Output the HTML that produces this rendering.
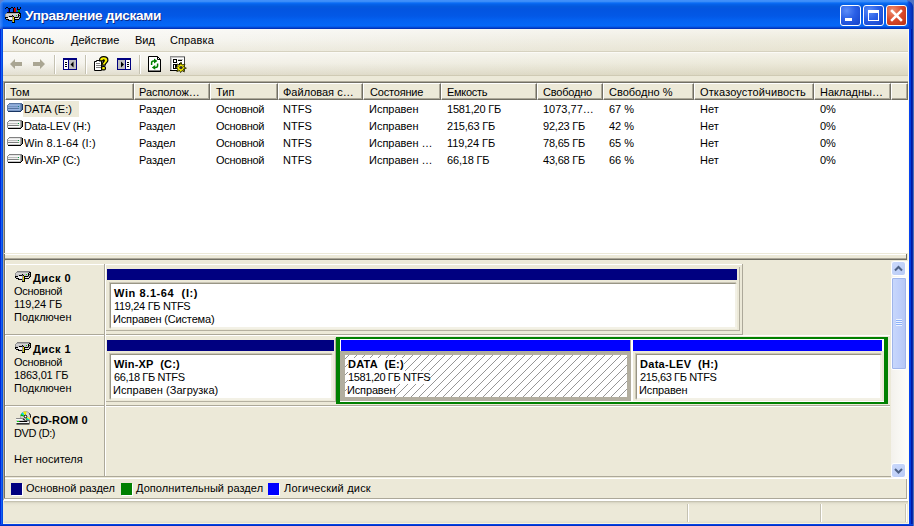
<!DOCTYPE html>
<html lang="ru">
<head>
<meta charset="utf-8">
<title>Управление дисками</title>
<style>
html,body{margin:0;padding:0;}
body{width:914px;height:526px;overflow:hidden;position:relative;background:#ece9d8;
 font-family:"Liberation Sans",sans-serif;font-size:11px;color:#000;}
div,span{position:absolute;box-sizing:border-box;}
.t{white-space:nowrap;line-height:13px;height:13px;transform-origin:0 0;}
.b{font-weight:bold;}
/* window frame */
#title{left:0;top:0;width:914px;height:29px;background:linear-gradient(to bottom,#4391fb 0,#3a8cf8 1.5px,#0b6df5 3px,#0561e8 4.5px,#0459dd 6.5px,#0355e0 9px,#0358e6 16px,#0461f0 20px,#0567f7 25.5px,#0559e6 27px,#0238c2 28px,#002fb4 29px);}
#bl{left:0;top:29px;width:3px;height:497px;background:linear-gradient(to right,#0126da 0,#0126da 1px,#1262f2 1px,#1262f2 2px,#0249e2 2px);}
#br{left:909px;top:0;width:5px;height:526px;background:linear-gradient(to right,#0843f0 0,#0843f0 1px,#023ee0 1px,#023ee0 2px,#0019a6 2px,#0019a6 3px,#0a2aa8 3px,#0a2aa8 4px,#4a6cba 4px);}
#bb{left:0;top:524px;width:913px;height:2px;background:linear-gradient(to bottom,#0543e6 0,#0543e6 1px,#0030c4 1px);}
#ttext{left:25px;top:8px;font-size:13.6px;letter-spacing:-0.3px;font-weight:bold;color:#fff;line-height:16px;height:16px;white-space:nowrap;text-shadow:1px 1px 0 #0a2a8a;}
.cb{top:5px;width:21px;height:21px;border:1px solid #fff;border-radius:3px;
 background:radial-gradient(circle at 30% 25%,#5c8df8 0,#2a5fe6 45%,#1442c8 100%);}
#cclose{background:radial-gradient(circle at 30% 25%,#f09070 0,#d8482a 50%,#b83014 100%);}
/* menu + toolbar */
#menu{left:3px;top:29px;width:906px;height:22px;background:linear-gradient(to bottom,rgba(255,255,255,.45) 0,rgba(255,255,255,0) 50%,rgba(214,208,180,.25) 100%),linear-gradient(to right,#f8f7f3 0,#f5f4ee 25%,#f0eee4 60%,#ece9d9 100%);}
#msep1{left:3px;top:51px;width:905px;height:1px;background:#d6d2c0;}
#msep2{left:3px;top:52px;width:905px;height:1px;background:#fbfaf6;}
#tool{left:3px;top:53px;width:906px;height:22px;background:linear-gradient(to bottom,rgba(255,255,255,.4) 0,rgba(255,255,255,0) 45%,rgba(190,182,150,.35) 100%),linear-gradient(to right,#f6f5f0 0,#f3f1e9 25%,#eeecdf 60%,#ebe8d7 100%);}
#tsep{left:3px;top:75px;width:905px;height:1px;background:#cfcab4;}
.vsep{top:55px;width:1px;height:19px;background:#c5c2b2;border-right:0;}
.vsep2{top:55px;width:1px;height:19px;background:#fff;}
/* list pane */
#list{left:4px;top:81px;width:904px;height:172px;background:#fff;border-left:1px solid #716f64;}
#listtop{left:4px;top:81px;width:904px;height:2px;background:linear-gradient(#aca899 50%,#716f64 50%);}
.hd{top:83px;height:17px;background:#ece9d8;border-right:1px solid #716f64;border-bottom:1px solid #716f64;border-left:1px solid #fff;border-top:1px solid #fff;box-shadow:inset -1px -1px 0 #aca899;}
/* lower pane */
.hl{height:1px;background:#aca899;}
.hw{height:1px;background:#fff;}
.bar{height:11px;background:#000080;}
.barL{height:11px;background:#0000ff;}
.vol{background:#fff;border-style:solid;border-width:1px 2px 2px 1px;border-color:#989585 #f3f1e6 #f3f1e6 #989585;box-shadow:-1px -1px 0 #cac6b6;}

.sbtn{width:15px;height:15px;border-radius:3px;border:1px solid #fff;background:linear-gradient(135deg,#cbd9fb,#b9cbf6);}
#thumb{border-radius:2px;border:1px solid #fff;background:linear-gradient(to right,#c9d8fc,#bdcefa 60%,#b4c6f4);box-shadow:0 0 0 1px #9fb5eb inset;}
.ssep{top:504px;width:2px;height:18px;background:linear-gradient(to right,#c5c2b2 50%,#fff 50%);}
#selvol{background:#fff;}
svg{position:absolute;overflow:visible;}
</style>
</head>
<body>
<!-- frame -->
<div id="title"></div>
<div id="bl"></div><div id="br"></div><div id="bb"></div>
<div style="left:0;top:0;width:3px;height:29px;background:linear-gradient(to right,rgba(120,170,255,.5),rgba(60,130,250,.2))"></div>
<div style="left:907px;top:0;width:6px;height:29px;background:linear-gradient(to right,rgba(4,50,200,0) 0,#0a44d8 2px,#0838c4 4px,#0628a8 6px)"></div>
<div style="left:907px;top:0;width:7px;height:7px;background:radial-gradient(circle at 0 100%,rgba(0,0,0,0) 5.5px,#4f74c4 6.5px)"></div>
<div style="left:0;top:0;width:6px;height:6px;background:radial-gradient(circle at 100% 100%,rgba(0,0,0,0) 5.5px,#5a80d0 6.5px)"></div>
<div id="ttext">Управление дисками</div>
<div class="cb" id="cmin" style="left:840px"><div style="left:4px;top:12px;width:7px;height:3px;background:#fff"></div></div>
<div class="cb" id="cmax" style="left:863px"><div style="left:4px;top:4px;width:11px;height:11px;border:1px solid #fff;border-top-width:3px"></div></div>
<div class="cb" id="cclose" style="left:886px"><svg width="19" height="19" style="left:0;top:0"><path d="M5 5L14 14M14 5L5 14" stroke="#fff" stroke-width="2.5" stroke-linecap="square"/></svg></div>

<!-- menu -->
<div id="menu"></div><div id="msep1"></div><div id="msep2"></div>
<div id="tool"></div><div id="tsep"></div>
<span class="t" style="left:12px;top:34px">Консоль</span>
<span class="t" style="left:71px;top:34px">Действие</span>
<span class="t" style="left:135px;top:34px">Вид</span>
<span class="t" style="left:170px;top:34px;letter-spacing:0.1px">Справка</span>


<!-- title icon -->
<svg id="ticon" width="16" height="16" style="left:5px;top:7px" shape-rendering="crispEdges"><rect x="0" y="1" width="1" height="1" fill="#000000"/><rect x="1" y="0" width="1" height="1" fill="#000000"/><rect x="2" y="0" width="1" height="1" fill="#000000"/><rect x="3" y="1" width="1" height="1" fill="#000000"/><rect x="6" y="0" width="1" height="1" fill="#000000"/><rect x="7" y="0" width="1" height="1" fill="#000000"/><rect x="5" y="1" width="1" height="1" fill="#000000"/><rect x="8" y="1" width="1" height="1" fill="#000000"/><rect x="9" y="0" width="1" height="1" fill="#000000"/><rect x="12" y="0" width="1" height="1" fill="#000000"/><rect x="15" y="0" width="1" height="1" fill="#000000"/><rect x="12" y="1" width="1" height="1" fill="#000000"/><rect x="15" y="1" width="1" height="1" fill="#000000"/><rect x="12" y="2" width="1" height="1" fill="#000000"/><rect x="13" y="2" width="1" height="1" fill="#000000"/><rect x="14" y="2" width="1" height="1" fill="#000000"/><rect x="4" y="1" width="1" height="4" fill="#000000"/><rect x="8" y="1" width="1" height="4" fill="#000000"/><rect x="3" y="2" width="1" height="3" fill="#0000c8"/><rect x="9" y="1" width="2" height="4" fill="#c80000"/><rect x="13" y="3" width="2" height="2" fill="#00a000"/><rect x="2" y="5" width="13" height="1" fill="#000000"/><rect x="1" y="6" width="1" height="1" fill="#909090"/><rect x="2" y="6" width="12" height="1" fill="#b0b0b0"/><rect x="14" y="6" width="2" height="1" fill="#000000"/><rect x="0" y="7" width="1" height="1" fill="#909090"/><rect x="1" y="7" width="12" height="1" fill="#d4d4d4"/><rect x="13" y="7" width="1" height="1" fill="#000000"/><rect x="14" y="7" width="1" height="1" fill="#c0c0c0"/><rect x="15" y="7" width="1" height="1" fill="#000000"/><rect x="0" y="8" width="1" height="1" fill="#909090"/><rect x="1" y="8" width="6" height="1" fill="#c8c8c8"/><rect x="7" y="8" width="1" height="1" fill="#000000"/><rect x="8" y="8" width="3" height="1" fill="#c0c0c0"/><rect x="11" y="8" width="1" height="1" fill="#00e000"/><rect x="12" y="8" width="1" height="1" fill="#d0d0d0"/><rect x="13" y="8" width="1" height="1" fill="#000000"/><rect x="14" y="8" width="1" height="1" fill="#404040"/><rect x="15" y="8" width="1" height="1" fill="#000000"/><rect x="0" y="9" width="1" height="1" fill="#909090"/><rect x="1" y="9" width="3" height="1" fill="#c0c0c0"/><rect x="4" y="9" width="3" height="1" fill="#000000"/><rect x="7" y="9" width="1" height="1" fill="#606060"/><rect x="8" y="9" width="1" height="1" fill="#000000"/><rect x="9" y="9" width="4" height="1" fill="#c4bcc4"/><rect x="13" y="9" width="1" height="1" fill="#000000"/><rect x="14" y="9" width="1" height="1" fill="#c0c0c0"/><rect x="15" y="9" width="1" height="1" fill="#000000"/><rect x="0" y="10" width="3" height="1" fill="#000000"/><rect x="3" y="10" width="4" height="1" fill="#e8e8e8"/><rect x="7" y="10" width="1" height="1" fill="#9090a0"/><rect x="8" y="10" width="1" height="1" fill="#f4e800"/><rect x="9" y="10" width="4" height="1" fill="#000000"/><rect x="13" y="10" width="1" height="1" fill="#808080"/><rect x="14" y="10" width="1" height="1" fill="#505050"/><rect x="15" y="10" width="1" height="1" fill="#000000"/><rect x="0" y="11" width="1" height="1" fill="#000000"/><rect x="1" y="11" width="2" height="1" fill="#c0c0c0"/><rect x="3" y="11" width="4" height="1" fill="#f4f4f4"/><rect x="7" y="11" width="1" height="1" fill="#9090a0"/><rect x="8" y="11" width="1" height="1" fill="#c8b800"/><rect x="9" y="11" width="1" height="1" fill="#000000"/><rect x="10" y="11" width="4" height="1" fill="#e0e0e0"/><rect x="14" y="11" width="1" height="1" fill="#000000"/><rect x="1" y="12" width="3" height="1" fill="#000000"/><rect x="4" y="12" width="3" height="1" fill="#e0e0e0"/><rect x="7" y="12" width="1" height="1" fill="#9090a0"/><rect x="8" y="12" width="1" height="1" fill="#f4e800"/><rect x="9" y="12" width="5" height="1" fill="#000000"/><rect x="3" y="13" width="4" height="1" fill="#000000"/><rect x="7" y="13" width="1" height="1" fill="#808090"/><rect x="8" y="13" width="1" height="1" fill="#c8b800"/><rect x="9" y="13" width="1" height="1" fill="#000000"/><rect x="7" y="14" width="1" height="1" fill="#707080"/><rect x="8" y="14" width="1" height="1" fill="#f4e800"/><rect x="9" y="14" width="1" height="1" fill="#000000"/><rect x="7" y="15" width="3" height="1" fill="#000000"/></svg>

<!-- toolbar icons -->
<svg width="12" height="10" style="left:10px;top:59px"><path d="M0 5L5 0V3H12V7H5V10z" fill="#aaa693"/></svg>
<svg width="12" height="10" style="left:33px;top:59px"><path d="M12 5L7 0V3H0V7H7V10z" fill="#aaa693"/></svg>
<div class="vsep" style="left:54px"></div><div class="vsep2" style="left:55px"></div>
<svg width="14" height="12" style="left:63px;top:58px" shape-rendering="crispEdges">
 <rect x="0" y="0" width="14" height="12" fill="#000080"/>
 <rect x="1" y="2" width="4" height="9" fill="#fff"/><rect x="6" y="2" width="7" height="9" fill="#c0c0c0"/>
 <rect x="2" y="4" width="2" height="1" fill="#000"/><rect x="2" y="6" width="2" height="1" fill="#000"/><rect x="2" y="8" width="2" height="1" fill="#000"/>
 <path d="M7.5 6.5L10.5 3.5V9.5z" fill="#000" shape-rendering="geometricPrecision"/>
</svg>
<div class="vsep" style="left:85px"></div><div class="vsep2" style="left:86px"></div>
<svg width="16" height="16" style="left:93px;top:56px">
 <path d="M1.5 5.5H3.5V4.5H8.5V14.5H1.5z" fill="#fff" stroke="#000" stroke-width="1"/>
 <path d="M3 7.5H7M3 9.5H8M3 11.5H8" stroke="#808080" stroke-width="1" fill="none"/>
 <path d="M6.6 4.8C6.2 1.8 8.4 0.7 10.6 0.7C13.2 0.7 14.9 2.1 14.9 4.2C14.9 6.6 12.3 7.1 12.1 9.2H8.7C8.7 6.6 11.3 6.1 11.3 4.5C11.3 3.7 10 3.7 9.9 4.9z" fill="#f8f000" stroke="#000" stroke-width="1.2"/>
 <rect x="8.6" y="10.5" width="3.8" height="3.4" rx="1.2" fill="#f8f000" stroke="#000" stroke-width="1.2"/>
</svg>
<svg width="14" height="12" style="left:117px;top:58px" shape-rendering="crispEdges">
 <rect x="0" y="0" width="14" height="12" fill="#000080"/>
 <rect x="1" y="2" width="7" height="9" fill="#c0c0c0"/><rect x="9" y="2" width="4" height="9" fill="#fff"/>
 <rect x="10" y="4" width="2" height="1" fill="#000"/><rect x="10" y="6" width="2" height="1" fill="#000"/><rect x="10" y="8" width="2" height="1" fill="#000"/>
 <path d="M7 6.5L4 3.5V9.5z" fill="#000" shape-rendering="geometricPrecision"/>
</svg>
<div class="vsep" style="left:139px"></div><div class="vsep2" style="left:140px"></div>
<svg width="13" height="16" style="left:148px;top:56px">
 <path d="M0.5 0.5H9.5L12.5 3.5V15H0.5z" fill="#fff" stroke="#000" stroke-width="1"/>
 <path d="M0 15.5H13" stroke="#000" stroke-width="1"/>
 <path d="M9.5 0.5V3.5H12.5" fill="none" stroke="#000" stroke-width="1"/>
 <path d="M3.6 9V7Q3.6 5 5.6 5H6.5" fill="none" stroke="#008000" stroke-width="1.5"/>
 <path d="M6 2.6L9.4 5L6 7.4z" fill="#008000"/>
 <path d="M9.6 7.5V9.4Q9.6 11.4 7.6 11.4H6.5" fill="none" stroke="#008000" stroke-width="1.5"/>
 <path d="M7.2 9L3.8 11.4L7.2 13.8z" fill="#008000"/>
</svg>
<svg width="17" height="17" style="left:170px;top:56px" shape-rendering="crispEdges">
 <rect x="0" y="0" width="15" height="15" fill="#909090"/>
 <rect x="1" y="1" width="13" height="13" fill="#c8c8c8"/>
 <rect x="2" y="2" width="12" height="12" fill="#fff"/>
 <rect x="0" y="14" width="15" height="1" fill="#000"/><rect x="14" y="1" width="1" height="14" fill="#404040"/>
 <rect x="3" y="3" width="4" height="4" fill="#000"/><rect x="4" y="4" width="2" height="2" fill="#fff"/>
 <rect x="8" y="4" width="4" height="1" fill="#000"/><rect x="8" y="3" width="5" height="1" fill="#c0c0c0"/>
 <rect x="3" y="8" width="4" height="5" fill="#000"/><rect x="4" y="9" width="1" height="3" fill="#fff"/>
 <rect x="9" y="7" width="3" height="3" fill="#000"/>
 <g shape-rendering="geometricPrecision"><path d="M11 6L12 9L15 8L13.6 10.8L16.4 12.2L13.4 13L14.4 16L12 14.6L10.6 16.6L9.6 14.6L6.8 15.6L8 13L5.6 11.6L8.2 10.6L7.2 8L9.8 9z" fill="#f4ec00" stroke="#202000" stroke-width="0.8"/>
 <circle cx="11" cy="11.6" r="1.7" fill="#303030"/></g>
</svg>

<!-- list -->
<div style="left:3px;top:81px;width:1px;height:419px;background:#aca899"></div>
<div id="list"></div><div id="listtop"></div>
<div class="hd" style="left:5px;width:129px"></div>
<span class="t" style="left:10px;top:86px">Том</span>
<div class="hd" style="left:134px;width:76px"></div>
<span class="t" style="left:139px;top:86px;letter-spacing:-0.06px">Располож…</span>
<div class="hd" style="left:210px;width:68px"></div>
<span class="t" style="left:216px;top:86px">Тип</span>
<div class="hd" style="left:278px;width:85px"></div>
<span class="t" style="left:283px;top:86px">Файловая с…</span>
<div class="hd" style="left:363px;width:78px"></div>
<span class="t" style="left:370px;top:86px;letter-spacing:-0.19px">Состояние</span>
<div class="hd" style="left:441px;width:96px"></div>
<span class="t" style="left:447px;top:86px;letter-spacing:-0.28px">Емкость</span>
<div class="hd" style="left:537px;width:66px"></div>
<span class="t" style="left:543px;top:86px;letter-spacing:-0.2px">Свободно</span>
<div class="hd" style="left:603px;width:91px"></div>
<span class="t" style="left:609px;top:86px">Свободно %</span>
<div class="hd" style="left:694px;width:120px"></div>
<span class="t" style="left:700px;top:86px;letter-spacing:0.13px">Отказоустойчивость</span>
<div class="hd" style="left:814px;width:77px"></div>
<span class="t" style="left:820px;top:86px">Накладны…</span>
<div class="hd" style="left:891px;width:17px"></div>
<div id="sel" style="left:23px;top:101px;width:56px;height:16px;background:#ece9d8"></div>
<svg width="16" height="9" style="left:7px;top:103px" shape-rendering="crispEdges"><rect x="2" y="0" width="13" height="1" fill="#5875a2"/><rect x="1" y="1" width="1" height="1" fill="#5875a2"/><rect x="2" y="1" width="11" height="1" fill="#8aa7d4"/><rect x="13" y="1" width="1" height="1" fill="#6885b2"/><rect x="14" y="1" width="1" height="1" fill="#506d9a"/><rect x="15" y="1" width="1" height="1" fill="#183562"/><rect x="0" y="2" width="1" height="1" fill="#607daa"/><rect x="1" y="2" width="12" height="1" fill="#93b0dd"/><rect x="13" y="2" width="1" height="1" fill="#708dba"/><rect x="14" y="2" width="1" height="1" fill="#5875a2"/><rect x="15" y="2" width="1" height="1" fill="#183562"/><rect x="0" y="3" width="1" height="1" fill="#607daa"/><rect x="1" y="3" width="10" height="1" fill="#7693c0"/><rect x="11" y="3" width="1" height="1" fill="#188582"/><rect x="12" y="3" width="1" height="1" fill="#90adda"/><rect x="13" y="3" width="1" height="1" fill="#708dba"/><rect x="14" y="3" width="1" height="1" fill="#5875a2"/><rect x="15" y="3" width="1" height="1" fill="#183562"/><rect x="0" y="4" width="1" height="1" fill="#607daa"/><rect x="1" y="4" width="12" height="1" fill="#90adda"/><rect x="13" y="4" width="1" height="1" fill="#708dba"/><rect x="14" y="4" width="1" height="1" fill="#5875a2"/><rect x="15" y="4" width="1" height="1" fill="#183562"/><rect x="0" y="5" width="1" height="1" fill="#607daa"/><rect x="1" y="5" width="10" height="1" fill="#5673a0"/><rect x="11" y="5" width="1" height="1" fill="#50899e"/><rect x="12" y="5" width="1" height="1" fill="#88a5d2"/><rect x="13" y="5" width="1" height="1" fill="#708dba"/><rect x="14" y="5" width="1" height="1" fill="#5875a2"/><rect x="15" y="5" width="1" height="1" fill="#183562"/><rect x="0" y="6" width="1" height="1" fill="#607daa"/><rect x="1" y="6" width="12" height="1" fill="#98b4e2"/><rect x="13" y="6" width="1" height="1" fill="#708dba"/><rect x="14" y="6" width="1" height="1" fill="#506d9a"/><rect x="15" y="6" width="1" height="1" fill="#183562"/><rect x="0" y="7" width="1" height="1" fill="#6c89b6"/><rect x="1" y="7" width="12" height="1" fill="#7a97c4"/><rect x="13" y="7" width="1" height="1" fill="#607daa"/><rect x="14" y="7" width="1" height="1" fill="#183562"/><rect x="1" y="8" width="13" height="1" fill="#183562"/></svg>
<span class="t" style="left:24px;top:103px">DATA (E:)</span>
<span class="t" style="left:139px;top:103px">Раздел</span>
<span class="t" style="left:216px;top:103px;letter-spacing:-0.28px">Основной</span>
<span class="t" style="left:283px;top:103px">NTFS</span>
<span class="t" style="left:369px;top:103px">Исправен</span>
<span class="t" style="left:447px;top:103px;letter-spacing:-0.2px">1581,20 ГБ</span>
<span class="t" style="left:543px;top:103px">1073,77…</span>
<span class="t" style="left:609px;top:103px">67 %</span>
<span class="t" style="left:700px;top:103px">Нет</span>
<span class="t" style="left:820px;top:103px">0%</span>
<svg width="16" height="9" style="left:7px;top:120px" shape-rendering="crispEdges"><rect x="2" y="0" width="13" height="1" fill="#808080"/><rect x="1" y="1" width="1" height="1" fill="#808080"/><rect x="2" y="1" width="11" height="1" fill="#e4e4e4"/><rect x="13" y="1" width="1" height="1" fill="#a0a0a0"/><rect x="14" y="1" width="1" height="1" fill="#707070"/><rect x="15" y="1" width="1" height="1" fill="#000000"/><rect x="0" y="2" width="1" height="1" fill="#909090"/><rect x="1" y="2" width="12" height="1" fill="#f6f6f6"/><rect x="13" y="2" width="1" height="1" fill="#b0b0b0"/><rect x="14" y="2" width="1" height="1" fill="#808080"/><rect x="15" y="2" width="1" height="1" fill="#000000"/><rect x="0" y="3" width="1" height="1" fill="#909090"/><rect x="1" y="3" width="10" height="1" fill="#bcbcbc"/><rect x="11" y="3" width="1" height="1" fill="#00a040"/><rect x="12" y="3" width="1" height="1" fill="#f0f0f0"/><rect x="13" y="3" width="1" height="1" fill="#b0b0b0"/><rect x="14" y="3" width="1" height="1" fill="#808080"/><rect x="15" y="3" width="1" height="1" fill="#000000"/><rect x="0" y="4" width="1" height="1" fill="#909090"/><rect x="1" y="4" width="12" height="1" fill="#f0f0f0"/><rect x="13" y="4" width="1" height="1" fill="#b0b0b0"/><rect x="14" y="4" width="1" height="1" fill="#808080"/><rect x="15" y="4" width="1" height="1" fill="#000000"/><rect x="0" y="5" width="1" height="1" fill="#909090"/><rect x="1" y="5" width="10" height="1" fill="#7c7c7c"/><rect x="11" y="5" width="1" height="1" fill="#70a878"/><rect x="12" y="5" width="1" height="1" fill="#e0e0e0"/><rect x="13" y="5" width="1" height="1" fill="#b0b0b0"/><rect x="14" y="5" width="1" height="1" fill="#808080"/><rect x="15" y="5" width="1" height="1" fill="#000000"/><rect x="0" y="6" width="1" height="1" fill="#909090"/><rect x="1" y="6" width="12" height="1" fill="#ffffff"/><rect x="13" y="6" width="1" height="1" fill="#b0b0b0"/><rect x="14" y="6" width="1" height="1" fill="#707070"/><rect x="15" y="6" width="1" height="1" fill="#000000"/><rect x="0" y="7" width="1" height="1" fill="#a8a8a8"/><rect x="1" y="7" width="12" height="1" fill="#c4c4c4"/><rect x="13" y="7" width="1" height="1" fill="#909090"/><rect x="14" y="7" width="1" height="1" fill="#000000"/><rect x="1" y="8" width="13" height="1" fill="#000000"/></svg>
<span class="t" style="left:24px;top:120px;letter-spacing:-0.21px">Data-LEV (H:)</span>
<span class="t" style="left:139px;top:120px">Раздел</span>
<span class="t" style="left:216px;top:120px;letter-spacing:-0.28px">Основной</span>
<span class="t" style="left:283px;top:120px">NTFS</span>
<span class="t" style="left:369px;top:120px">Исправен</span>
<span class="t" style="left:447px;top:120px;letter-spacing:-0.21px">215,63 ГБ</span>
<span class="t" style="left:543px;top:120px;letter-spacing:-0.22px">92,23 ГБ</span>
<span class="t" style="left:609px;top:120px">42 %</span>
<span class="t" style="left:700px;top:120px">Нет</span>
<span class="t" style="left:820px;top:120px">0%</span>
<svg width="16" height="9" style="left:7px;top:137px" shape-rendering="crispEdges"><rect x="2" y="0" width="13" height="1" fill="#808080"/><rect x="1" y="1" width="1" height="1" fill="#808080"/><rect x="2" y="1" width="11" height="1" fill="#e4e4e4"/><rect x="13" y="1" width="1" height="1" fill="#a0a0a0"/><rect x="14" y="1" width="1" height="1" fill="#707070"/><rect x="15" y="1" width="1" height="1" fill="#000000"/><rect x="0" y="2" width="1" height="1" fill="#909090"/><rect x="1" y="2" width="12" height="1" fill="#f6f6f6"/><rect x="13" y="2" width="1" height="1" fill="#b0b0b0"/><rect x="14" y="2" width="1" height="1" fill="#808080"/><rect x="15" y="2" width="1" height="1" fill="#000000"/><rect x="0" y="3" width="1" height="1" fill="#909090"/><rect x="1" y="3" width="10" height="1" fill="#bcbcbc"/><rect x="11" y="3" width="1" height="1" fill="#00a040"/><rect x="12" y="3" width="1" height="1" fill="#f0f0f0"/><rect x="13" y="3" width="1" height="1" fill="#b0b0b0"/><rect x="14" y="3" width="1" height="1" fill="#808080"/><rect x="15" y="3" width="1" height="1" fill="#000000"/><rect x="0" y="4" width="1" height="1" fill="#909090"/><rect x="1" y="4" width="12" height="1" fill="#f0f0f0"/><rect x="13" y="4" width="1" height="1" fill="#b0b0b0"/><rect x="14" y="4" width="1" height="1" fill="#808080"/><rect x="15" y="4" width="1" height="1" fill="#000000"/><rect x="0" y="5" width="1" height="1" fill="#909090"/><rect x="1" y="5" width="10" height="1" fill="#7c7c7c"/><rect x="11" y="5" width="1" height="1" fill="#70a878"/><rect x="12" y="5" width="1" height="1" fill="#e0e0e0"/><rect x="13" y="5" width="1" height="1" fill="#b0b0b0"/><rect x="14" y="5" width="1" height="1" fill="#808080"/><rect x="15" y="5" width="1" height="1" fill="#000000"/><rect x="0" y="6" width="1" height="1" fill="#909090"/><rect x="1" y="6" width="12" height="1" fill="#ffffff"/><rect x="13" y="6" width="1" height="1" fill="#b0b0b0"/><rect x="14" y="6" width="1" height="1" fill="#707070"/><rect x="15" y="6" width="1" height="1" fill="#000000"/><rect x="0" y="7" width="1" height="1" fill="#a8a8a8"/><rect x="1" y="7" width="12" height="1" fill="#c4c4c4"/><rect x="13" y="7" width="1" height="1" fill="#909090"/><rect x="14" y="7" width="1" height="1" fill="#000000"/><rect x="1" y="8" width="13" height="1" fill="#000000"/></svg>
<span class="t" style="left:24px;top:137px;letter-spacing:0.14px">Win 8.1-64 (I:)</span>
<span class="t" style="left:139px;top:137px">Раздел</span>
<span class="t" style="left:216px;top:137px;letter-spacing:-0.28px">Основной</span>
<span class="t" style="left:283px;top:137px">NTFS</span>
<span class="t" style="left:369px;top:137px">Исправен …</span>
<span class="t" style="left:447px;top:137px;letter-spacing:-0.12px">119,24 ГБ</span>
<span class="t" style="left:543px;top:137px;letter-spacing:-0.22px">78,65 ГБ</span>
<span class="t" style="left:609px;top:137px">65 %</span>
<span class="t" style="left:700px;top:137px">Нет</span>
<span class="t" style="left:820px;top:137px">0%</span>
<svg width="16" height="9" style="left:7px;top:154px" shape-rendering="crispEdges"><rect x="2" y="0" width="13" height="1" fill="#808080"/><rect x="1" y="1" width="1" height="1" fill="#808080"/><rect x="2" y="1" width="11" height="1" fill="#e4e4e4"/><rect x="13" y="1" width="1" height="1" fill="#a0a0a0"/><rect x="14" y="1" width="1" height="1" fill="#707070"/><rect x="15" y="1" width="1" height="1" fill="#000000"/><rect x="0" y="2" width="1" height="1" fill="#909090"/><rect x="1" y="2" width="12" height="1" fill="#f6f6f6"/><rect x="13" y="2" width="1" height="1" fill="#b0b0b0"/><rect x="14" y="2" width="1" height="1" fill="#808080"/><rect x="15" y="2" width="1" height="1" fill="#000000"/><rect x="0" y="3" width="1" height="1" fill="#909090"/><rect x="1" y="3" width="10" height="1" fill="#bcbcbc"/><rect x="11" y="3" width="1" height="1" fill="#00a040"/><rect x="12" y="3" width="1" height="1" fill="#f0f0f0"/><rect x="13" y="3" width="1" height="1" fill="#b0b0b0"/><rect x="14" y="3" width="1" height="1" fill="#808080"/><rect x="15" y="3" width="1" height="1" fill="#000000"/><rect x="0" y="4" width="1" height="1" fill="#909090"/><rect x="1" y="4" width="12" height="1" fill="#f0f0f0"/><rect x="13" y="4" width="1" height="1" fill="#b0b0b0"/><rect x="14" y="4" width="1" height="1" fill="#808080"/><rect x="15" y="4" width="1" height="1" fill="#000000"/><rect x="0" y="5" width="1" height="1" fill="#909090"/><rect x="1" y="5" width="10" height="1" fill="#7c7c7c"/><rect x="11" y="5" width="1" height="1" fill="#70a878"/><rect x="12" y="5" width="1" height="1" fill="#e0e0e0"/><rect x="13" y="5" width="1" height="1" fill="#b0b0b0"/><rect x="14" y="5" width="1" height="1" fill="#808080"/><rect x="15" y="5" width="1" height="1" fill="#000000"/><rect x="0" y="6" width="1" height="1" fill="#909090"/><rect x="1" y="6" width="12" height="1" fill="#ffffff"/><rect x="13" y="6" width="1" height="1" fill="#b0b0b0"/><rect x="14" y="6" width="1" height="1" fill="#707070"/><rect x="15" y="6" width="1" height="1" fill="#000000"/><rect x="0" y="7" width="1" height="1" fill="#a8a8a8"/><rect x="1" y="7" width="12" height="1" fill="#c4c4c4"/><rect x="13" y="7" width="1" height="1" fill="#909090"/><rect x="14" y="7" width="1" height="1" fill="#000000"/><rect x="1" y="8" width="13" height="1" fill="#000000"/></svg>
<span class="t" style="left:24px;top:154px;letter-spacing:-0.24px">Win-XP (C:)</span>
<span class="t" style="left:139px;top:154px">Раздел</span>
<span class="t" style="left:216px;top:154px;letter-spacing:-0.28px">Основной</span>
<span class="t" style="left:283px;top:154px">NTFS</span>
<span class="t" style="left:369px;top:154px">Исправен …</span>
<span class="t" style="left:447px;top:154px;letter-spacing:-0.17px">66,18 ГБ</span>
<span class="t" style="left:543px;top:154px;letter-spacing:-0.22px">43,68 ГБ</span>
<span class="t" style="left:609px;top:154px">66 %</span>
<span class="t" style="left:700px;top:154px">Нет</span>
<span class="t" style="left:820px;top:154px">0%</span>

<!-- splitter -->
<div style="left:5px;top:254px;width:902px;height:1px;background:#fff"></div>
<div style="left:4px;top:258px;width:903px;height:1px;background:#aca899"></div>
<div style="left:4px;top:259px;width:903px;height:1px;background:#716f64"></div>
<div style="left:906px;top:254px;width:1px;height:5px;background:#716f64"></div>
<div style="left:4px;top:254px;width:1px;height:245px;background:#716f64"></div>
<div style="left:5px;top:261px;width:1px;height:216px;background:#fff"></div>

<!-- disk rows -->
<div class="hw" style="left:5px;top:264px;width:738px"></div>
<div class="hl" style="left:5px;top:334px;width:738px"></div>
<div style="left:742px;top:264px;width:1px;height:71px;background:#aca899"></div>
<div class="hw" style="left:5px;top:335px;width:885px"></div>
<div class="hl" style="left:5px;top:405px;width:885px"></div>
<div class="hw" style="left:5px;top:406px;width:885px"></div>
<div class="hl" style="left:5px;top:476px;width:886px"></div>
<div style="left:104px;top:264px;width:1px;height:212px;background:#aca899"></div>
<div style="left:105px;top:264px;width:1px;height:212px;background:#fff"></div>

<!-- disk 0 -->
<div style="left:739px;top:267px;width:1px;height:64px;background:#b4b0a0"></div><div style="left:106px;top:330px;width:634px;height:1px;background:#b4b0a0"></div>
<svg width="16" height="11" style="left:15px;top:271px" shape-rendering="crispEdges"><rect x="2" y="0" width="13" height="1" fill="#808080"/><rect x="1" y="1" width="1" height="1" fill="#909090"/><rect x="2" y="1" width="12" height="1" fill="#b0b0b0"/><rect x="14" y="1" width="2" height="1" fill="#000000"/><rect x="0" y="2" width="1" height="1" fill="#909090"/><rect x="1" y="2" width="12" height="1" fill="#d4d4d4"/><rect x="13" y="2" width="1" height="1" fill="#000000"/><rect x="14" y="2" width="1" height="1" fill="#c0c0c0"/><rect x="15" y="2" width="1" height="1" fill="#000000"/><rect x="0" y="3" width="1" height="1" fill="#909090"/><rect x="1" y="3" width="6" height="1" fill="#c8c8c8"/><rect x="7" y="3" width="1" height="1" fill="#000000"/><rect x="8" y="3" width="3" height="1" fill="#c0c0c0"/><rect x="11" y="3" width="1" height="1" fill="#00e000"/><rect x="12" y="3" width="1" height="1" fill="#d0d0d0"/><rect x="13" y="3" width="1" height="1" fill="#000000"/><rect x="14" y="3" width="1" height="1" fill="#404040"/><rect x="15" y="3" width="1" height="1" fill="#000000"/><rect x="0" y="4" width="1" height="1" fill="#909090"/><rect x="1" y="4" width="3" height="1" fill="#c0c0c0"/><rect x="4" y="4" width="3" height="1" fill="#000000"/><rect x="7" y="4" width="1" height="1" fill="#606060"/><rect x="8" y="4" width="1" height="1" fill="#000000"/><rect x="9" y="4" width="4" height="1" fill="#c4bcc4"/><rect x="13" y="4" width="1" height="1" fill="#000000"/><rect x="14" y="4" width="1" height="1" fill="#c0c0c0"/><rect x="15" y="4" width="1" height="1" fill="#000000"/><rect x="0" y="5" width="3" height="1" fill="#000000"/><rect x="3" y="5" width="4" height="1" fill="#e8e8e8"/><rect x="7" y="5" width="1" height="1" fill="#9090a0"/><rect x="8" y="5" width="1" height="1" fill="#f4e800"/><rect x="9" y="5" width="4" height="1" fill="#000000"/><rect x="13" y="5" width="1" height="1" fill="#808080"/><rect x="14" y="5" width="1" height="1" fill="#505050"/><rect x="15" y="5" width="1" height="1" fill="#000000"/><rect x="0" y="6" width="1" height="1" fill="#000000"/><rect x="1" y="6" width="2" height="1" fill="#c0c0c0"/><rect x="3" y="6" width="4" height="1" fill="#f4f4f4"/><rect x="7" y="6" width="1" height="1" fill="#9090a0"/><rect x="8" y="6" width="1" height="1" fill="#c8b800"/><rect x="9" y="6" width="1" height="1" fill="#000000"/><rect x="10" y="6" width="4" height="1" fill="#e0e0e0"/><rect x="14" y="6" width="1" height="1" fill="#000000"/><rect x="1" y="7" width="3" height="1" fill="#000000"/><rect x="4" y="7" width="3" height="1" fill="#e0e0e0"/><rect x="7" y="7" width="1" height="1" fill="#9090a0"/><rect x="8" y="7" width="1" height="1" fill="#f4e800"/><rect x="9" y="7" width="5" height="1" fill="#000000"/><rect x="3" y="8" width="4" height="1" fill="#000000"/><rect x="7" y="8" width="1" height="1" fill="#808090"/><rect x="8" y="8" width="1" height="1" fill="#c8b800"/><rect x="9" y="8" width="1" height="1" fill="#000000"/><rect x="7" y="9" width="1" height="1" fill="#707080"/><rect x="8" y="9" width="1" height="1" fill="#f4e800"/><rect x="9" y="9" width="1" height="1" fill="#000000"/><rect x="7" y="10" width="3" height="1" fill="#000000"/></svg>
<span class="t b" style="left:33px;top:272px;letter-spacing:0.42px">Диск 0</span>
<span class="t" style="left:14px;top:285px;letter-spacing:-0.28px">Основной</span>
<span class="t" style="left:14px;top:298px;letter-spacing:-0.12px">119,24 ГБ</span>
<span class="t" style="left:14px;top:311px">Подключен</span>
<div class="bar" style="left:107px;top:269px;width:630px"></div>
<div class="vol" style="left:110px;top:283px;width:627px;height:46px"></div>
<span class="t b" style="left:114px;top:287px;letter-spacing:0.6px">Win 8.1-64&nbsp; (I:)</span>
<span class="t" style="left:114px;top:300px;letter-spacing:-0.32px">119,24 ГБ NTFS</span>
<span class="t" style="left:113px;top:313px;letter-spacing:-0.15px">Исправен (Система)</span>

<!-- disk 1 -->
<div style="left:335px;top:338px;width:1px;height:64px;background:#b4b0a0"></div><div style="left:106px;top:401px;width:230px;height:1px;background:#b4b0a0"></div>
<svg width="16" height="11" style="left:15px;top:342px" shape-rendering="crispEdges"><rect x="2" y="0" width="13" height="1" fill="#808080"/><rect x="1" y="1" width="1" height="1" fill="#909090"/><rect x="2" y="1" width="12" height="1" fill="#b0b0b0"/><rect x="14" y="1" width="2" height="1" fill="#000000"/><rect x="0" y="2" width="1" height="1" fill="#909090"/><rect x="1" y="2" width="12" height="1" fill="#d4d4d4"/><rect x="13" y="2" width="1" height="1" fill="#000000"/><rect x="14" y="2" width="1" height="1" fill="#c0c0c0"/><rect x="15" y="2" width="1" height="1" fill="#000000"/><rect x="0" y="3" width="1" height="1" fill="#909090"/><rect x="1" y="3" width="6" height="1" fill="#c8c8c8"/><rect x="7" y="3" width="1" height="1" fill="#000000"/><rect x="8" y="3" width="3" height="1" fill="#c0c0c0"/><rect x="11" y="3" width="1" height="1" fill="#00e000"/><rect x="12" y="3" width="1" height="1" fill="#d0d0d0"/><rect x="13" y="3" width="1" height="1" fill="#000000"/><rect x="14" y="3" width="1" height="1" fill="#404040"/><rect x="15" y="3" width="1" height="1" fill="#000000"/><rect x="0" y="4" width="1" height="1" fill="#909090"/><rect x="1" y="4" width="3" height="1" fill="#c0c0c0"/><rect x="4" y="4" width="3" height="1" fill="#000000"/><rect x="7" y="4" width="1" height="1" fill="#606060"/><rect x="8" y="4" width="1" height="1" fill="#000000"/><rect x="9" y="4" width="4" height="1" fill="#c4bcc4"/><rect x="13" y="4" width="1" height="1" fill="#000000"/><rect x="14" y="4" width="1" height="1" fill="#c0c0c0"/><rect x="15" y="4" width="1" height="1" fill="#000000"/><rect x="0" y="5" width="3" height="1" fill="#000000"/><rect x="3" y="5" width="4" height="1" fill="#e8e8e8"/><rect x="7" y="5" width="1" height="1" fill="#9090a0"/><rect x="8" y="5" width="1" height="1" fill="#f4e800"/><rect x="9" y="5" width="4" height="1" fill="#000000"/><rect x="13" y="5" width="1" height="1" fill="#808080"/><rect x="14" y="5" width="1" height="1" fill="#505050"/><rect x="15" y="5" width="1" height="1" fill="#000000"/><rect x="0" y="6" width="1" height="1" fill="#000000"/><rect x="1" y="6" width="2" height="1" fill="#c0c0c0"/><rect x="3" y="6" width="4" height="1" fill="#f4f4f4"/><rect x="7" y="6" width="1" height="1" fill="#9090a0"/><rect x="8" y="6" width="1" height="1" fill="#c8b800"/><rect x="9" y="6" width="1" height="1" fill="#000000"/><rect x="10" y="6" width="4" height="1" fill="#e0e0e0"/><rect x="14" y="6" width="1" height="1" fill="#000000"/><rect x="1" y="7" width="3" height="1" fill="#000000"/><rect x="4" y="7" width="3" height="1" fill="#e0e0e0"/><rect x="7" y="7" width="1" height="1" fill="#9090a0"/><rect x="8" y="7" width="1" height="1" fill="#f4e800"/><rect x="9" y="7" width="5" height="1" fill="#000000"/><rect x="3" y="8" width="4" height="1" fill="#000000"/><rect x="7" y="8" width="1" height="1" fill="#808090"/><rect x="8" y="8" width="1" height="1" fill="#c8b800"/><rect x="9" y="8" width="1" height="1" fill="#000000"/><rect x="7" y="9" width="1" height="1" fill="#707080"/><rect x="8" y="9" width="1" height="1" fill="#f4e800"/><rect x="9" y="9" width="1" height="1" fill="#000000"/><rect x="7" y="10" width="3" height="1" fill="#000000"/></svg>
<span class="t b" style="left:33px;top:343px;letter-spacing:0.42px">Диск 1</span>
<span class="t" style="left:14px;top:356px;letter-spacing:-0.28px">Основной</span>
<span class="t" style="left:14px;top:369px;letter-spacing:-0.18px">1863,01 ГБ</span>
<span class="t" style="left:14px;top:382px">Подключен</span>
<div class="bar" style="left:107px;top:340px;width:227px"></div>
<div class="vol" style="left:110px;top:354px;width:223px;height:46px"></div>
<span class="t b" style="left:114px;top:358px;letter-spacing:0.21px">Win-XP&nbsp; (C:)</span>
<span class="t" style="left:114px;top:371px;letter-spacing:-0.38px">66,18 ГБ NTFS</span>
<span class="t" style="left:113px;top:384px;letter-spacing:0.05px">Исправен (Загрузка)</span>

<div id="green" style="left:336px;top:337px;width:552px;height:67px;border-style:solid;border-color:#008000;border-width:2px 4px 2px 4px;background:#fff"></div>
<div style="left:340px;top:351px;width:544px;height:50px;background:#ece9d8"></div>
<div style="left:630px;top:340px;width:1px;height:11px;background:#aca899"></div>
<div style="left:631px;top:339px;width:2px;height:63px;background:#fff"></div>
<div class="barL" style="left:341px;top:340px;width:289px"></div>
<div id="selvol" style="left:340px;top:351px;width:291px;height:50px;border-style:solid;border-color:#b2ae9f;border-width:4px 4px 4px 5px"><svg width="282" height="42" style="left:0;top:0" shape-rendering="crispEdges"><defs><pattern id="hatch" width="8" height="8" patternUnits="userSpaceOnUse" patternTransform="translate(4 0)"><path d="M-1 9L9 -1" stroke="#969696" stroke-width="1" fill="none"/></pattern></defs><rect width="282" height="42" fill="url(#hatch)"/></svg></div>
<span class="t b" style="left:348px;top:358px;background:#fff;letter-spacing:0.26px">DATA&nbsp; (E:)</span>
<span class="t" style="left:348px;top:371px;background:#fff;letter-spacing:-0.37px">1581,20 ГБ NTFS</span>
<span class="t" style="left:347px;top:384px;background:#fff;letter-spacing:-0.15px">Исправен</span>

<div class="barL" style="left:633px;top:340px;width:249px"></div>
<div class="vol" style="left:636px;top:354px;width:246px;height:46px"></div>
<span class="t b" style="left:640px;top:358px;letter-spacing:0.3px">Data-LEV&nbsp; (H:)</span>
<span class="t" style="left:640px;top:371px;letter-spacing:-0.37px">215,63 ГБ NTFS</span>
<span class="t" style="left:639px;top:384px;letter-spacing:-0.14px">Исправен</span>

<!-- cdrom -->
<svg width="16" height="14" style="left:15px;top:411px">
 <circle cx="10.5" cy="5.5" r="5" fill="#d8d8d8" stroke="#969696" stroke-width="0.8"/>
 <path d="M10.5 5.5L6 3A5 5 0 0 1 8 1.2z" fill="#00d8e8"/>
 <path d="M10.5 5.5L5.6 5A5 5 0 0 1 6.2 3z" fill="#00c000"/>
 <path d="M10.5 5.5L8.2 1A5 5 0 0 1 11.5 0.6z" fill="#f0f000"/>
 <path d="M10.5 5.5L14.6 8.4A5 5 0 0 1 13 9.8z" fill="#00d8e8"/>
 <path d="M10.5 5.5L13 9.8A5 5 0 0 1 11.6 10.4z" fill="#00c000"/>
 <path d="M10.5 5.5L15.3 7A5 5 0 0 1 14.6 8.4z" fill="#f0f000"/>
 <path d="M14.5 2.5A5 5 0 0 1 15.5 6.5" stroke="#000" stroke-width="1" fill="none"/>
 <circle cx="10.5" cy="5.5" r="1.3" fill="#fff" stroke="#000" stroke-width="1"/>
 <path d="M1.5 7.5H9L10 9H14.5V13.5H1.5z" fill="#000"/>
 <path d="M1 7.5H7.5L9 9.5H14V12H1z" fill="#d0d0d0"/>
 <rect x="1" y="8" width="6" height="1" fill="#f8f8f8"/>
 <rect x="1" y="11" width="13" height="1.2" fill="#f8f8f8"/>
 <rect x="2" y="10" width="2.2" height="1" fill="#00e000"/><rect x="4.2" y="10" width="8" height="1" fill="#000"/>
 <rect x="1" y="7" width="6" height="0.8" fill="#808080"/>
</svg>
<span class="t b" style="left:32px;top:414px;letter-spacing:0.19px">CD-ROM 0</span>
<span class="t" style="left:14px;top:427px;letter-spacing:-0.45px">DVD (D:)</span>
<span class="t" style="left:14px;top:453px">Нет носителя</span>

<!-- scrollbar -->
<div id="sb" style="left:891px;top:261px;width:18px;height:217px;background:linear-gradient(to right,#f3f1ec,#fefefb)"></div>
<div class="sbtn" style="left:891px;top:261px"><svg width="13" height="13" style="left:0;top:0"><path d="M3 8.5L6.5 5L10 8.5" stroke="#4d6185" stroke-width="2" fill="none"/></svg></div>
<div class="sbtn" style="left:891px;top:463px"><svg width="13" height="13" style="left:0;top:0"><path d="M3 5L6.5 8.5L10 5" stroke="#4d6185" stroke-width="2" fill="none"/></svg></div>
<div id="thumb" style="left:891px;top:277px;width:16px;height:93px"><div style="left:4px;top:41px;width:6px;height:7px;background:repeating-linear-gradient(to bottom,#eef4fe 0,#eef4fe 1px,#8cb0f8 1px,#8cb0f8 2px)"></div></div>

<!-- legend -->
<div class="hw" style="left:5px;top:478px;width:903px"></div>
<div style="left:11px;top:483px;width:11px;height:12px;background:#000080;box-shadow:1px 1px 0 #fff"></div>
<span class="t" style="left:26px;top:482px">Основной раздел</span>
<div style="left:121px;top:483px;width:11px;height:12px;background:#008000;box-shadow:1px 1px 0 #fff"></div>
<span class="t" style="left:136px;top:482px;letter-spacing:0.07px">Дополнительный раздел</span>
<div style="left:268px;top:483px;width:11px;height:12px;background:#0000ff;box-shadow:1px 1px 0 #fff"></div>
<span class="t" style="left:284px;top:482px;letter-spacing:0.2px">Логический диск</span>
<div style="left:4px;top:498px;width:904px;height:1px;background:#aca899"></div>
<div style="left:4px;top:499px;width:904px;height:2px;background:#fff"></div>

<!-- status bar -->
<div style="left:908px;top:29px;width:1px;height:495px;background:#fdfbea;z-index:5"></div>
<div style="left:3px;top:523px;width:906px;height:1px;background:#f6f3df;z-index:5"></div>
<div id="status" style="left:4px;top:501px;width:905px;height:23px;background:linear-gradient(to bottom,#b8b5a5 0,#d2cfbd 1px,#e2dfce 2px,#eae7d6 4px,#ece9d8 6px,#ece9d8 19px,#e4e1cf 21px,#dcd9c6 23px)"></div>
<div class="ssep" style="left:687px"></div>
<div class="ssep" style="left:820px"></div>
<div class="ssep" style="left:905px"></div>
<div style="left:907px;top:478px;width:1px;height:22px;background:#fff"></div>
<div style="left:906px;top:479px;width:1px;height:20px;background:#aca899"></div>


</body>
</html>
